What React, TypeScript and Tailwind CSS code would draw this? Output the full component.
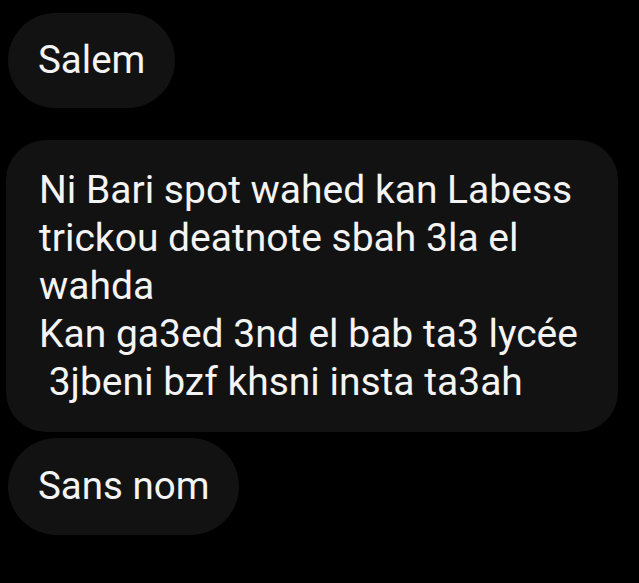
import React from 'react';

const LINES = [
  'Ni Bari spot wahed kan Labess',
  'trickou deatnote sbah 3la el',
  'wahda',
  'Kan ga3ed 3nd el bab ta3 lycée',
  ' 3jbeni bzf khsni insta ta3ah',
];

export default function App() {
  return (
    <div
      className="w-[639px] h-[583px] bg-black text-[#f4f4f4] flex flex-col items-start pt-[13px] overflow-hidden"
      style={{ fontFamily: 'Roboto, "Noto Sans", sans-serif' }}
    >
      {/* first message */}
      <div className="ml-[8px] h-[95px] px-[30px] flex items-center rounded-full bg-[#121212] text-[38.5px] leading-none">
        Salem
      </div>

      {/* long message */}
      <div className="ml-[6px] mt-[32px] w-[612px] h-[292px] pl-[33px] pt-[26px] rounded-[40px] bg-[#121212] text-[39px] leading-[48px]">
        {LINES.map((line, i) => (
          <div key={i} className="whitespace-pre">{line}</div>
        ))}
      </div>

      {/* last message */}
      <div className="ml-[8px] mt-[6px] h-[97px] px-[30px] flex items-center rounded-full bg-[#121212] text-[38.5px] leading-none">
        Sans nom
      </div>
    </div>
  );
}
